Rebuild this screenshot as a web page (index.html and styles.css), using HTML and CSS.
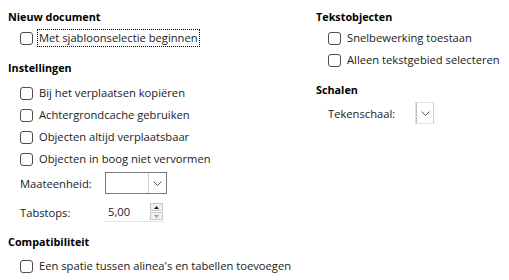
FILE: index.html
```html
<!DOCTYPE html>
<html>

<head>
    <meta charset="utf-8" />
    <title>Opties - Algemeen</title>
    <meta name="viewport" content="width=device-width, initial-scale=1">
    <link rel="stylesheet" href="styles.css">
</head>

<body>
    <div class="page">
        <div class="col col-left">
            <div class="group">
                <h3 class="title">Nieuw document</h3>
                <label class="check"><span class="box"></span><span class="text focus">Met sjabloonselectie beginnen</span></label>
            </div>
            <div class="group group-settings">
                <h3 class="title">Instellingen</h3>
                <label class="check"><span class="box"></span><span class="text">Bij het verplaatsen kopiëren</span></label>
                <label class="check"><span class="box"></span><span class="text">Achtergrondcache gebruiken</span></label>
                <label class="check"><span class="box"></span><span class="text">Objecten altijd verplaatsbaar</span></label>
                <label class="check"><span class="box"></span><span class="text">Objecten in boog niet vervormen</span></label>
                <div class="field field-combo">
                    <span class="label">Maateenheid:</span>
                    <span class="combo"><span class="combo-value"></span><span class="combo-btn"><svg width="9" height="5" viewBox="0 0 9 5"><path d="M0.5 0.5 L4.5 4.5 L8.5 0.5" fill="none" stroke="#555" stroke-width="1"/></svg></span></span>
                </div>
                <div class="field field-spin">
                    <span class="label">Tabstops:</span>
                    <span class="spin">
                        <span class="spin-value">5,00</span>
                        <span class="spin-btns">
                            <span class="spin-btn up"><svg width="5" height="3" viewBox="0 0 5 3"><path d="M0 3 L2.5 0 L5 3 Z" fill="#222"/></svg></span>
                            <span class="spin-btn down"><svg width="5" height="3" viewBox="0 0 5 3"><path d="M0 0 L2.5 3 L5 0 Z" fill="#999"/></svg></span>
                        </span>
                    </span>
                </div>
            </div>
            <div class="group group-compat">
                <h3 class="title">Compatibiliteit</h3>
                <label class="check"><span class="box"></span><span class="text">Een spatie tussen alinea's en tabellen toevoegen</span></label>
            </div>
        </div>
        <div class="col col-right">
            <div class="group">
                <h3 class="title">Tekstobjecten</h3>
                <label class="check"><span class="box"></span><span class="text">Snelbewerking toestaan</span></label>
                <label class="check"><span class="box"></span><span class="text">Alleen tekstgebied selecteren</span></label>
            </div>
            <div class="group">
                <h3 class="title">Schalen</h3>
                <div class="field field-combo">
                    <span class="label label-wide">Tekenschaal:</span>
                    <span class="combo combo-narrow"><span class="combo-btn"><svg width="9" height="5" viewBox="0 0 9 5"><path d="M0.5 0.5 L4.5 4.5 L8.5 0.5" fill="none" stroke="#555" stroke-width="1"/></svg></span></span>
                </div>
            </div>
        </div>
    </div>
</body>

</html>
```

FILE: styles.css
```css
body {
    margin: 0;
    background: #ffffff;
    font-family: "Open Sans", "Noto Sans", sans-serif;
    font-size: 11.2px;
    color: #1a1a1a;
}

.page {
    display: flex;
    padding: 9px 0 0 8px;
}

.col-left {
    width: 308px;
}

.group {
    display: flex;
    flex-direction: column;
    margin-bottom: 11px;
}

.title {
    margin: 0 0 2px 0;
    font-size: 10.8px;
    font-weight: 700;
    line-height: 16px;
    color: #000;
}

.group-settings .title {
    margin-bottom: 6px;
}

.group-compat .title {
    margin-bottom: 5px;
}

.check {
    display: flex;
    align-items: center;
    height: 22px;
    padding-left: 12px;
}

.box {
    width: 11px;
    height: 11px;
    border: 1px solid #4d4d4d;
    border-radius: 3px;
    margin-right: 5px;
    flex-shrink: 0;
}

.text {
    line-height: 16px;
    padding: 0 1px;
}

.text.focus {
    outline: 1px dotted #000;
    outline-offset: 0;
}

.field {
    display: flex;
    align-items: center;
    height: 22px;
    padding-left: 12px;
    margin-top: 2px;
}

.field-spin {
    margin-top: 7px;
}

.label {
    width: 85px;
}

.label-wide {
    width: 87px;
}

.combo {
    display: flex;
    width: 60px;
    height: 20px;
    border: 1px solid #7a7a7a;
    background: #fff;
}

.combo-value {
    flex: 1;
}

.combo-btn {
    width: 17px;
    display: flex;
    align-items: center;
    justify-content: center;
    border-left: 1px solid #cfcfcf;
}

.combo-narrow {
    width: 17px;
    border-color: #e0e0e0;
    border-right-color: #cfcfcf;
}

.combo-narrow .combo-btn {
    border-left: 1px solid #bdbdbd;
}

.spin {
    display: flex;
    align-items: center;
    width: 60px;
    height: 19px;
    background: #fff;
    border-bottom: 1px solid #e3e3e3;
}

.spin-value {
    flex: 1;
    padding-left: 3px;
    line-height: 16px;
}

.spin-btns {
    display: flex;
    flex-direction: column;
    gap: 1px;
    margin-right: 2px;
}

.spin-btn {
    width: 13px;
    height: 8px;
    display: flex;
    align-items: center;
    justify-content: center;
    background: #f0f0f0;
    border: 1px solid #c8c8c8;
    box-sizing: border-box;
}
```
